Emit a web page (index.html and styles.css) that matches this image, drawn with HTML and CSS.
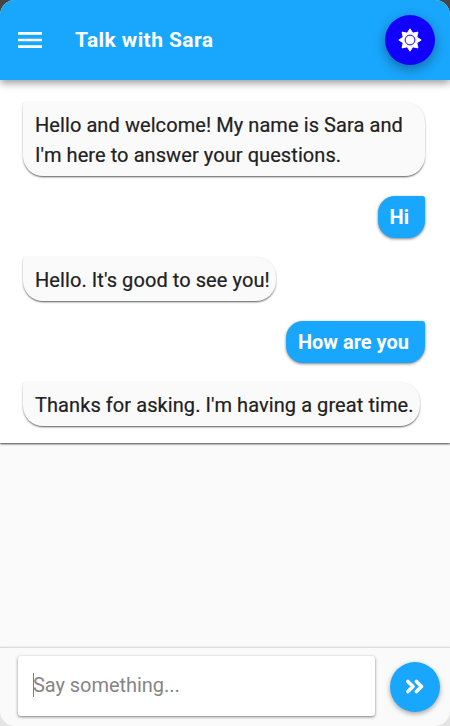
FILE: index.html
```html
<!DOCTYPE html>
<html lang="en">
<head>
<meta charset="utf-8">
<title>Talk with Sara</title>
<link rel="stylesheet" href="styles.css">
</head>
<body>
<div class="app">
  <header class="topbar">
    <svg class="menu" viewBox="0 0 24 16"><path d="M0 1.4h24M0 8h24M0 14.6h24"/></svg>
    <h1>Talk with Sara</h1>
    <button class="round theme" aria-label="Theme">
      <svg width="24" height="24" viewBox="-12 -12 24 24">
        <path class="rays" d="M0-11.200 2.800-6.800 7.900-7.900 6.800-2.800 11.200 0 6.800 2.800 7.900 7.900 2.800 6.800 0 11.200-2.800 6.800-7.900 7.900-6.800 2.800-11.200 0-6.800-2.800-7.900-7.900-2.800-6.800Z"/>
        <circle class="ring" r="4.9"/>
      </svg>
    </button>
  </header>
  <main class="chat">
    <p class="msg bot wide">Hello and welcome! My name is Sara and I'm here to answer your questions.</p>
    <p class="msg user">Hi</p>
    <p class="msg bot">Hello. It's good to see you!</p>
    <p class="msg user">How are you</p>
    <p class="msg bot">Thanks for asking. I'm having a great time.</p>
  </main>
  <footer class="composer">
    <div class="field"><span class="caret"></span><span class="hint">Say something...</span></div>
    <button class="round send" aria-label="Send">
      <svg width="20" height="18" viewBox="0 0 20 18"><path d="M2.900 3.500 8 8.500l-5.100 5M11.400 3.500 16.500 8.500l-5.100 5"/></svg>
    </button>
  </footer>
</div>
</body>
</html>
```
FILE: styles.css
```css
* { box-sizing: border-box; }
body {
  margin: 0;
  background: linear-gradient(#444 0 50%, #e4e4e4 50%);
  font-family: Roboto, sans-serif;
  color: #212121;
}
.app {
  height: 726px;
  display: flex;
  flex-direction: column;
  background: #fafafa;
  border-radius: 15px;
  overflow: hidden;
}
.topbar {
  position: relative;
  z-index: 1;
  flex: 0 0 80px;
  display: flex;
  align-items: center;
  padding: 0 15px 0 18px;
  background: #19a6fd;
  box-shadow: 0 3px 8px rgba(0, 0, 0, .4);
}
.menu { width: 24px; height: 16px; stroke: #fff; stroke-width: 2.6; }
h1 {
  margin: 0 auto 0 33px;
  color: #fff;
  font-size: 21px;
  line-height: 30px;
  font-weight: 700;
  letter-spacing: .42px;
}
.round {
  flex: none;
  display: flex;
  align-items: center;
  justify-content: center;
  width: 50px;
  height: 50px;
  padding: 0;
  border: 0;
  border-radius: 50%;
  background: #19a6fd;
  box-shadow: 0 2px 5px rgba(0, 0, 0, .35);
}
.theme { background: #1200ff; box-shadow: 0 4px 12px rgba(0, 0, 0, .35); }
.theme svg { margin-bottom: 1px; }
.rays { fill: #fff; stroke: #fff; stroke-width: 1; stroke-linejoin: round; }
.ring { fill: none; stroke: #1200ff; stroke-width: 1; }
.chat {
  flex: 0 0 363px;
  min-height: 0;
  display: flex;
  flex-direction: column;
  align-items: flex-start;
  padding: 22px 25px 0 23px;
  background: #fff;
  box-shadow: 0 1px 2px rgba(0, 0, 0, .75);
}
.msg {
  flex: none;
  margin: 0 0 20px;
  padding: 8px 6px 6px 12px;
  font-size: 20px;
  line-height: 30px;
  white-space: nowrap;
}
.msg:last-child { margin-bottom: 0; }
.bot {
  background: #fafafa;
  letter-spacing: .075px;
  -webkit-text-stroke: .2px #212121;
  border-radius: 3px 20px 20px 20px;
  box-shadow: 0 1px 2px rgba(0, 0, 0, .35), 0 2px 2px -1px rgba(0, 0, 0, .4);
}
.wide { align-self: stretch; white-space: normal; }
.user {
  align-self: flex-end;
  margin-bottom: 19px;
  padding: 6px 16px 6px 12px;
  color: #fff;
  font-weight: 700;
  background: #19a6fd;
  border-radius: 17px 3px 17px 17px;
  box-shadow: 0 1px 3px rgba(0, 0, 0, .5);
}
.composer {
  flex: 0 0 79px;
  margin-top: auto;
  display: flex;
  gap: 15px;
  padding: 8px 10px 10px 18px;
  border-top: 1px solid #ddd;
  box-shadow: 0 0 2px rgba(0, 0, 0, .12);
}
.field {
  flex: 1;
  display: flex;
  align-items: center;
  height: 60px;
  padding: 0 15px 2px;
  background: #fff;
  border-radius: 3px;
  box-shadow: 0 1px 3px rgba(0, 0, 0, .5);
}
.caret { width: 1px; height: 24px; margin-right: -1px; background: #2196e3; }
.hint { font-size: 20px; line-height: 24px; color: #858585; letter-spacing: -.05px; }
.send { margin-top: 6px; }
.send path { fill: none; stroke: #fff; stroke-width: 3.7; stroke-linecap: round; stroke-linejoin: round; }
```
